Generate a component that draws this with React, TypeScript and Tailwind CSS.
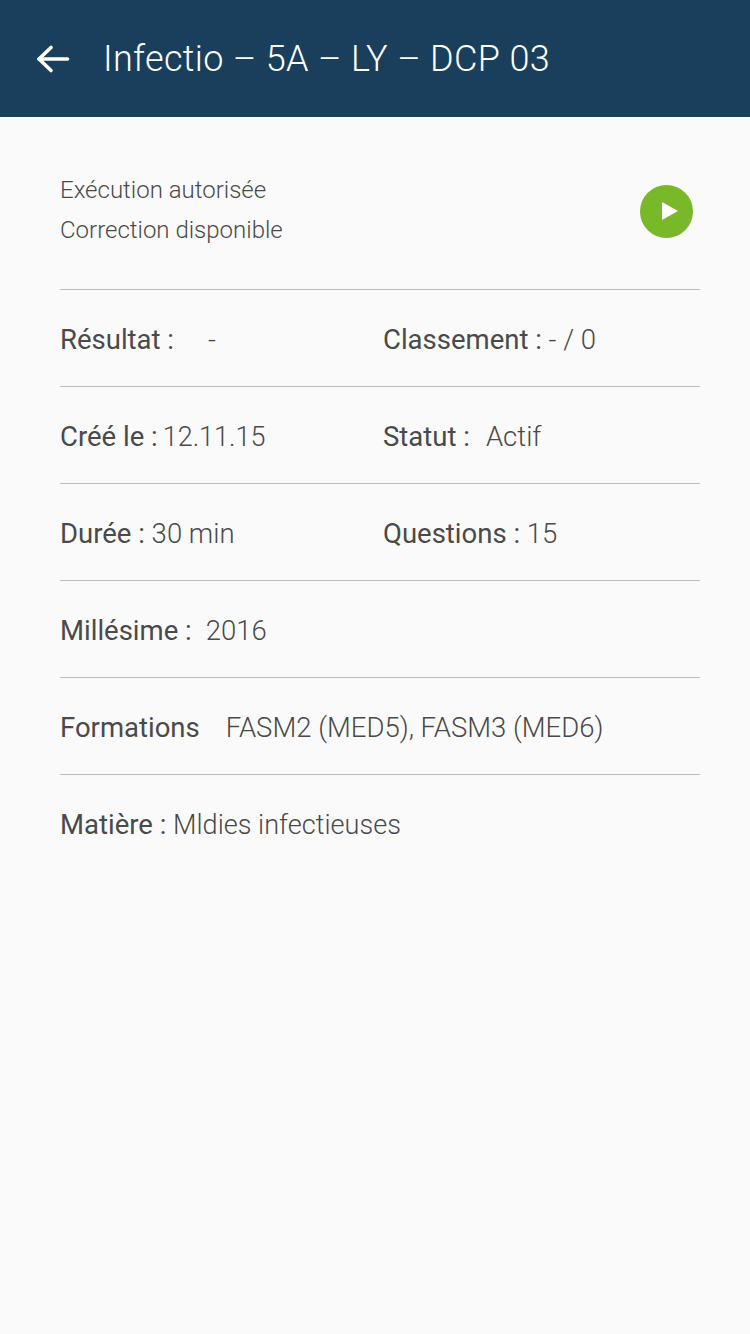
import React from "react";

function Row({ children }: { children: React.ReactNode }) {
  return (
    <div className="flex h-[97px] items-center border-b border-[#bdbdbd] pt-[4px] text-[27.5px] font-light text-[#4a4a4a]">
      {children}
    </div>
  );
}

function Label({ children }: { children: React.ReactNode }) {
  return <span className="font-normal">{children}</span>;
}

export default function App() {
  return (
    <div className="flex min-h-[1334px] flex-col bg-[#fafafa] font-['Roboto',sans-serif]">
      <header className="flex h-[117px] items-center bg-[#193f5d] pl-[36px]">
        <svg width="34" height="30" viewBox="0 0 34 30" fill="none" stroke="#ffffff" strokeWidth="3.6" strokeLinecap="round" strokeLinejoin="round">
          <path d="M3 15H31.5" />
          <path d="M15 3.5L3 15L15 26.5" />
        </svg>
        <h1 className="ml-[33px] text-[36px] font-light tracking-[0.35px] text-white">
          Infectio – 5A – LY – DCP 03
        </h1>
      </header>

      <main className="pl-[60px] pr-[50px]">
        <div className="flex h-[173px] items-center justify-between border-b border-[#bdbdbd] pt-[13px]">
          <div className="text-[24px] leading-[40px] font-light text-[#4a4a4a]">
            <p>Exécution autorisée</p>
            <p>Correction disponible</p>
          </div>
          <div className="mr-[7px] mt-[3px] flex h-[53px] w-[53px] items-center justify-center rounded-full bg-[#78b829]">
            <svg width="18" height="20" viewBox="0 0 18 20" className="ml-[6px]">
              <path d="M1 1L17 10L1 19Z" fill="#ffffff" />
            </svg>
          </div>
        </div>

        <Row>
          <span className="w-[323px]">
            <Label>Résultat :</Label>
            <span className="ml-[34px]">-</span>
          </span>
          <span>
            <Label>Classement :</Label> - / 0
          </span>
        </Row>
        <Row>
          <span className="w-[323px]">
            <Label>Créé le :</Label>
            <span className="ml-[5px] text-[27px]">12.11.15</span>
          </span>
          <span>
            <Label>Statut :</Label>
            <span className="ml-[16px]">Actif</span>
          </span>
        </Row>
        <Row>
          <span className="w-[323px]">
            <Label>Durée :</Label> 30 min
          </span>
          <span>
            <Label>Questions :</Label> 15
          </span>
        </Row>
        <Row>
          <Label>Millésime :</Label>
          <span className="ml-[14px]">2016</span>
        </Row>
        <Row>
          <Label>Formations</Label>
          <span className="ml-[26px]">FASM2 (MED5), FASM3 (MED6)</span>
        </Row>
        <div className="flex h-[97px] items-center pt-[3px] text-[27.5px] font-light text-[#4a4a4a]">
          <span>
            <Label>Matière :</Label> <span className="text-[27.1px]">Mldies infectieuses</span>
          </span>
        </div>
      </main>
    </div>
  );
}
